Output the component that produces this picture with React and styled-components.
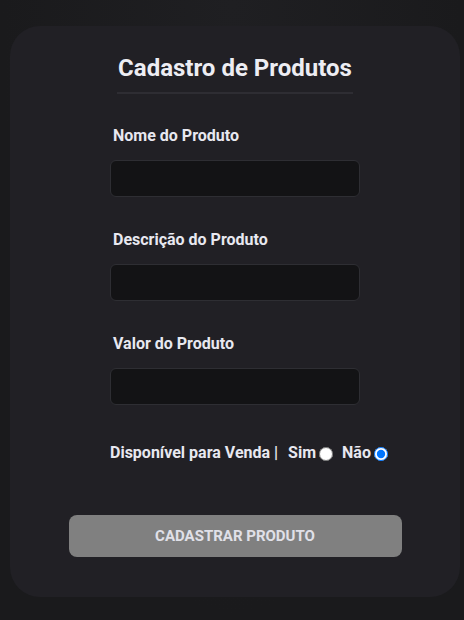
import React from "react";
import styled, { createGlobalStyle } from "styled-components";

const GlobalStyle = createGlobalStyle`
  html, body {
    margin: 0;
    padding: 0;
  }
  body {
    min-height: 100vh;
    background: radial-gradient(ellipse at 50% 0%, #1f1f22 0%, #1a1a1c 70%);
    font-family: Roboto, "Liberation Sans", sans-serif;
    color: #e8e8f0;
  }
`;

const Page = styled.div`
  display: flex;
  padding: 26px 0 23px 10px;
`;

const Card = styled.form`
  width: 450px;
  height: 571px;
  box-sizing: border-box;
  background: #212025;
  border-radius: 30px;
  display: flex;
  flex-direction: column;
  align-items: center;
  padding-top: 27px;
`;

const Title = styled.h1`
  margin: 0;
  font-size: 24px;
  font-weight: 700;
  line-height: 30px;
  padding: 0 0 9px 0;
  width: 236px;
  text-align: center;
  border-bottom: 2px solid #2e2d33;
  color: #ededf3;
`;

const Fields = styled.div`
  display: flex;
  flex-direction: column;
  gap: 33px;
  margin-top: 32px;
  width: 250px;
`;

const Field = styled.label`
  display: flex;
  flex-direction: column;
  gap: 14px;
`;

const Label = styled.span`
  font-size: 16px;
  font-weight: 700;
  line-height: 20px;
  padding-left: 3px;
`;

const Input = styled.input`
  box-sizing: border-box;
  width: 250px;
  height: 37px;
  background: #131315;
  border: 1px solid #2e2e33;
  border-radius: 6px;
  outline: none;
  color: #e6e6ee;
  padding: 0 10px;
  font: inherit;
`;

const RadioRow = styled.div`
  display: flex;
  align-items: center;
  align-self: flex-start;
  white-space: nowrap;
  margin-top: 5px;
  font-size: 16px;
  font-weight: 700;
  line-height: 20px;
`;

const Option = styled.label`
  display: flex;
  align-items: center;
  margin-left: ${(p) => p.$gap || 0}px;
`;

const Radio = styled.input`
  margin: 1px 0 0 3px;
  width: 14px;
  height: 14px;
`;

const Submit = styled.button`
  margin-top: 52px;
  width: 333px;
  height: 42px;
  border: none;
  border-radius: 8px;
  background: #808080;
  color: #e0e0e8;
  font-family: Roboto, "Liberation Sans", sans-serif;
  font-size: 15px;
  font-weight: 700;
  padding: 0;
  cursor: pointer;
`;

const App = () => {
  return (
    <>
      <GlobalStyle />
      <Page>
        <Card onSubmit={(e) => e.preventDefault()}>
          <Title>Cadastro de Produtos</Title>
          <Fields>
            <Field>
              <Label>Nome do Produto</Label>
              <Input type="text" />
            </Field>
            <Field>
              <Label>Descrição do Produto</Label>
              <Input type="text" />
            </Field>
            <Field>
              <Label>Valor do Produto</Label>
              <Input type="text" />
            </Field>
            <RadioRow>
              <span>Disponível para Venda |</span>
              <Option $gap={10}>
                Sim
                <Radio type="radio" name="disponivel" />
              </Option>
              <Option $gap={9}>
                Não
                <Radio type="radio" name="disponivel" defaultChecked />
              </Option>
            </RadioRow>
          </Fields>
          <Submit type="submit">CADASTRAR PRODUTO</Submit>
        </Card>
      </Page>
    </>
  );
};

export default App;
